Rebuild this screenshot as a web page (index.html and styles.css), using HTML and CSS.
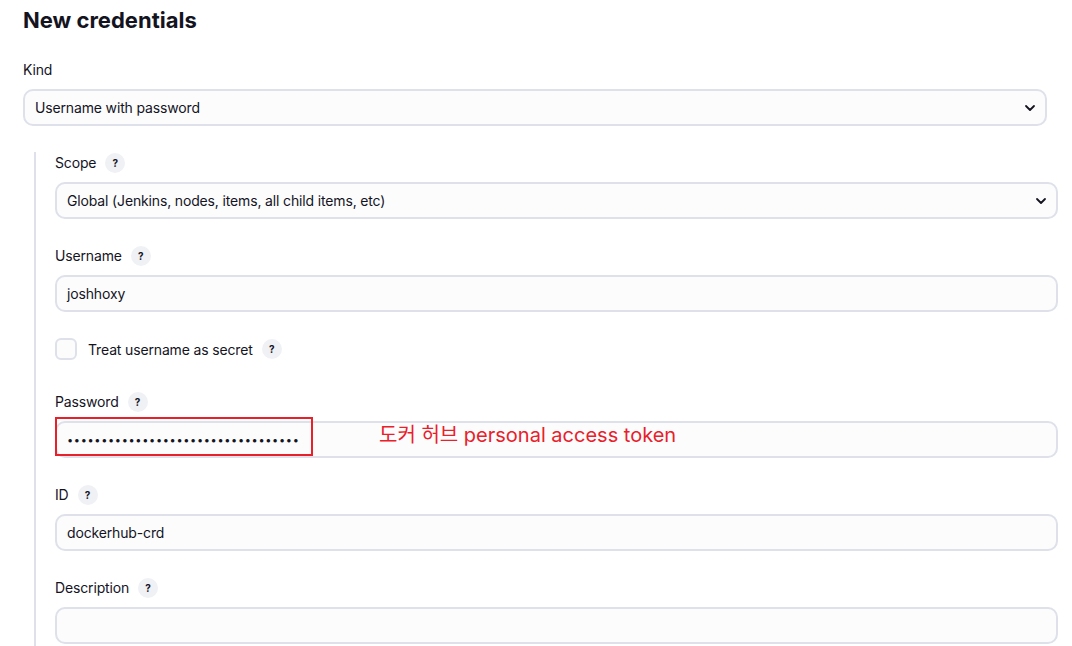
FILE: index.html
```html
<!DOCTYPE html>
<html>
<head>
<meta charset="utf-8">
<link rel="stylesheet" href="styles.css">
</head>
<body>
<div class="page">
  <h1 class="title">New credentials</h1>
  <div class="field kind">
    <div class="label">Kind</div>
    <div class="select"><span>Username with password</span><svg class="chev" width="12" height="8" viewBox="0 0 12 8"><path d="M2 2 L6 6 L10 2" fill="none" stroke="#14141f" stroke-width="1.8" stroke-linecap="round" stroke-linejoin="round"/></svg></div>
  </div>
  <div class="section">
    <div class="field">
      <div class="label">Scope <span class="help">?</span></div>
      <div class="select"><span>Global (Jenkins, nodes, items, all child items, etc)</span><svg class="chev" width="12" height="8" viewBox="0 0 12 8"><path d="M2 2 L6 6 L10 2" fill="none" stroke="#14141f" stroke-width="1.8" stroke-linecap="round" stroke-linejoin="round"/></svg></div>
    </div>
    <div class="field">
      <div class="label">Username <span class="help">?</span></div>
      <div class="input">joshhoxy</div>
    </div>
    <div class="check-row">
      <span class="checkbox"></span>
      <span class="check-label">Treat username as secret</span>
      <span class="help">?</span>
    </div>
    <div class="field">
      <div class="label">Password <span class="help">?</span></div>
      <div class="input pw">
        <span class="dots">••••••••••••••••••••••••••••••••••</span>
        <span class="note">도커 허브 personal access token</span>
        <span class="highlight"></span>
      </div>
    </div>
    <div class="field">
      <div class="label">ID <span class="help">?</span></div>
      <div class="input">dockerhub-crd</div>
    </div>
    <div class="field">
      <div class="label">Description <span class="help">?</span></div>
      <div class="input"></div>
    </div>
  </div>
</div>
</body>
</html>
```

FILE: styles.css
```css
html, body {
  margin: 0;
  padding: 0;
  background: #ffffff;
}
body {
  font-family: Inter, "Noto Sans", "Noto Sans CJK KR", sans-serif;
  color: #14141f;
  font-size: 14px;
  letter-spacing: -0.15px;
  overflow: hidden;
  height: 646px;
}
.page {
  padding: 6px 14px 0 23px;
  width: 1035px;
}
.title {
  margin: 0;
  font-size: 22px;
  font-weight: 700;
  line-height: 28px;
  letter-spacing: 0;
}
.field {
  display: flex;
  flex-direction: column;
}
.kind {
  margin-top: 26px;
  width: 1024px;
}
.label {
  display: flex;
  align-items: center;
  gap: 9px;
  height: 20px;
  line-height: 20px;
  margin-bottom: 9px;
}
.help {
  display: inline-flex;
  align-items: center;
  justify-content: center;
  width: 20px;
  height: 20px;
  border-radius: 50%;
  background: #eff1f5;
  font-size: 10px;
  font-weight: 700;
  letter-spacing: 0;
  color: #14141f;
}
.select, .input {
  box-sizing: border-box;
  height: 37px;
  border: 2px solid #dee1ea;
  border-radius: 10px;
  background: #fcfcfd;
  display: flex;
  align-items: center;
  padding: 0 10px;
  position: relative;
}
.select {
  justify-content: space-between;
  padding-right: 9px;
}
.section {
  margin-top: 26px;
  margin-left: 11px;
  border-left: 2px solid #dee1ea;
  padding-left: 19px;
  padding-top: 1px;
  padding-bottom: 20px;
  width: 1003px;
  display: flex;
  flex-direction: column;
  gap: 27px;
}
.check-row {
  display: flex;
  align-items: center;
  margin-top: -1px;
  margin-bottom: 5px;
}
.checkbox {
  box-sizing: border-box;
  width: 22px;
  height: 22px;
  border: 2px solid #dee1ea;
  border-radius: 6px;
  background: #fcfcfd;
  margin-right: 11px;
}
.check-label {
  margin-right: 9px;
}
.pw .dots {
  font-size: 11px;
  letter-spacing: 0.65px;
  width: 305px;
}
.note {
  color: #e8202a;
  font-size: 20px;
  letter-spacing: 0;
  margin-left: 7px;
  margin-top: -12px;
}
.highlight {
  position: absolute;
  left: -2px;
  top: -6px;
  width: 258px;
  height: 39px;
  box-sizing: border-box;
  border: 2px solid #e8202a;
}
```
